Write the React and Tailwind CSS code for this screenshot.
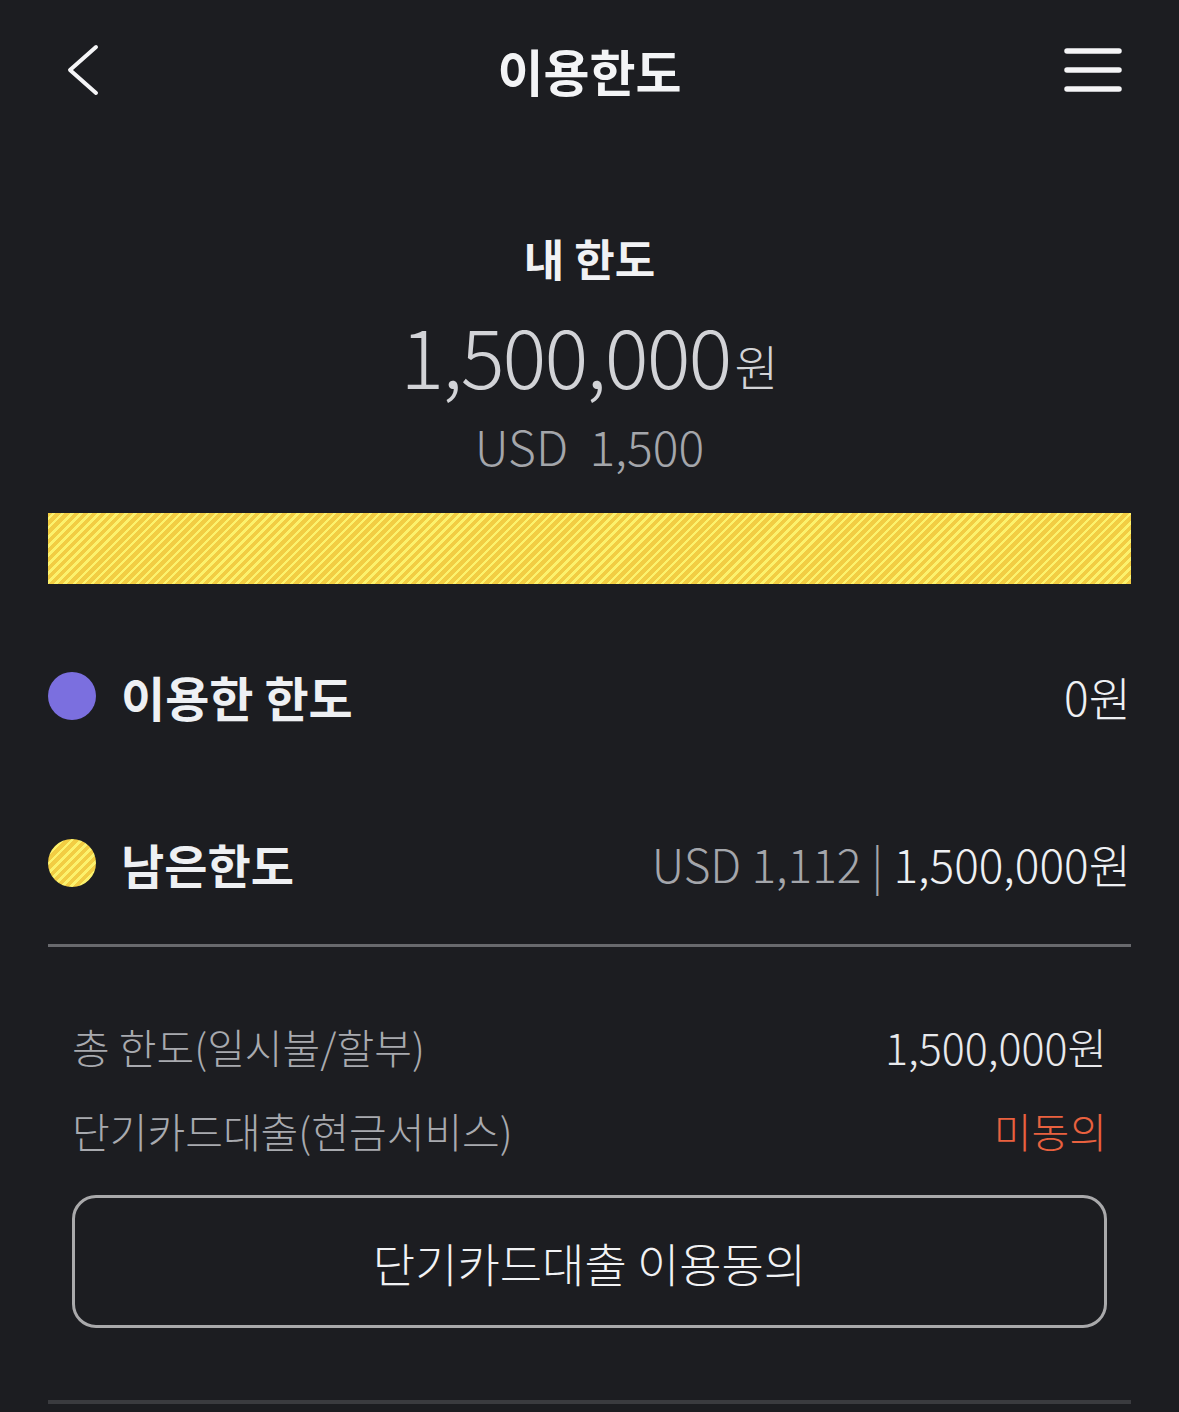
import React from 'react';

const stripes =
  'bg-[repeating-linear-gradient(-45deg,#f2cd43_0px,#f2cd43_4px,#fcf26d_4px,#fcf26d_6.4px)]';

const Header = () => (
  <div className="h-[140px] grid grid-cols-[1fr_auto_1fr] items-center px-[57px]">
    <button className="justify-self-start">
      <svg width="44" height="52" viewBox="0 0 44 52" fill="none">
        <path d="M39 3 L13 26 L39 49" stroke="#f5f5f7" strokeWidth="4" strokeLinecap="round" strokeLinejoin="round" />
      </svg>
    </button>
    <h1 className="text-[50px] font-bold leading-none text-[#f3f4f6]">이용한도</h1>
    <button className="justify-self-end">
      <svg width="58" height="46" viewBox="0 0 58 46" fill="none">
        <path d="M3 4 H55 M3 23 H55 M3 42 H55" stroke="#f5f5f7" strokeWidth="5.5" strokeLinecap="round" />
      </svg>
    </button>
  </div>
);

const LegendRow = ({ dot, label, labelSize, children, className }) => (
  <div className={`h-[80px] flex items-center justify-between ${className}`}>
    <div className="flex items-center gap-[25px]">
      {dot}
      <span className={`${labelSize} font-bold leading-none text-[#eef0f3]`}>{label}</span>
    </div>
    {children}
  </div>
);

export default function App() {
  return (
    <div
      className="min-h-[1412px] w-full bg-[#1c1d21] overflow-hidden"
      style={{ fontFamily: '"Noto Sans CJK KR", "Noto Sans", sans-serif' }}
    >
      <Header />

      {/* my limit */}
      <div className="flex flex-col items-center">
        <div className="mt-[88px] h-[60px] flex items-center text-[44px] font-bold leading-none text-[#f1f2f4]">
          내 한도
        </div>
        <div className="mt-[27px] h-[80px] flex items-end text-[#d2d3d7] font-light leading-none">
          <span className="text-[82px] tracking-[-2px]">1,500,000</span>
          <span className="text-[48px] mb-[6px] ml-[4px]">원</span>
        </div>
        <div className="mt-[21px] h-[58px] flex items-center text-[48px] font-light leading-none text-[#a4a6ab]">
          USD&nbsp; 1,500
        </div>
      </div>

      <div className="px-[48px]">
        <div className={`mt-[39px] h-[71px] ${stripes}`} />

        <LegendRow
          className="mt-[72px]"
          label="이용한 한도"
          labelSize="text-[48px]"
          dot={<span className="w-[48px] h-[48px] rounded-full bg-[#7b6fdf]" />}
        >
          <span className="text-[46px] font-light leading-none text-[#eef0f3]">0원</span>
        </LegendRow>

        <LegendRow
          className="mt-[87px]"
          label="남은한도"
          labelSize="text-[47px]"
          dot={<span className={`w-[48px] h-[48px] rounded-full ${stripes}`} />}
        >
          <span className="text-[46px] font-light leading-none">
            <span className="text-[#a4a6ab]">USD 1,112 | </span>
            <span className="text-[#eef0f3]">1,500,000원</span>
          </span>
        </LegendRow>

        <div className="mt-[41px] h-[3px] bg-[#68696d]" />

        {/* detail */}
        <div className="px-[24px]">
          <div className="mt-[69px] h-[60px] flex items-center justify-between font-light leading-none">
            <span className="text-[41px] text-[#a8aaaf]">총 한도(일시불/할부)</span>
            <span className="text-[43px] text-[#e8e9ec]">1,500,000원</span>
          </div>
          <div className="mt-[24px] h-[60px] flex items-center justify-between text-[41px] font-light leading-none">
            <span className="text-[#a8aaaf]">단기카드대출(현금서비스)</span>
            <span className="text-[#e9613f]">미동의</span>
          </div>

          <button className="mt-[35px] w-full h-[133px] rounded-[24px] border-[3px] border-[#a9a9ab] flex items-center justify-center text-[46px] font-light leading-none text-[#f1f2f4]">
            단기카드대출 이용동의
          </button>
        </div>

        <div className="mt-[72px] h-[4px] bg-[#3a3b3f]" />
      </div>
    </div>
  );
}
